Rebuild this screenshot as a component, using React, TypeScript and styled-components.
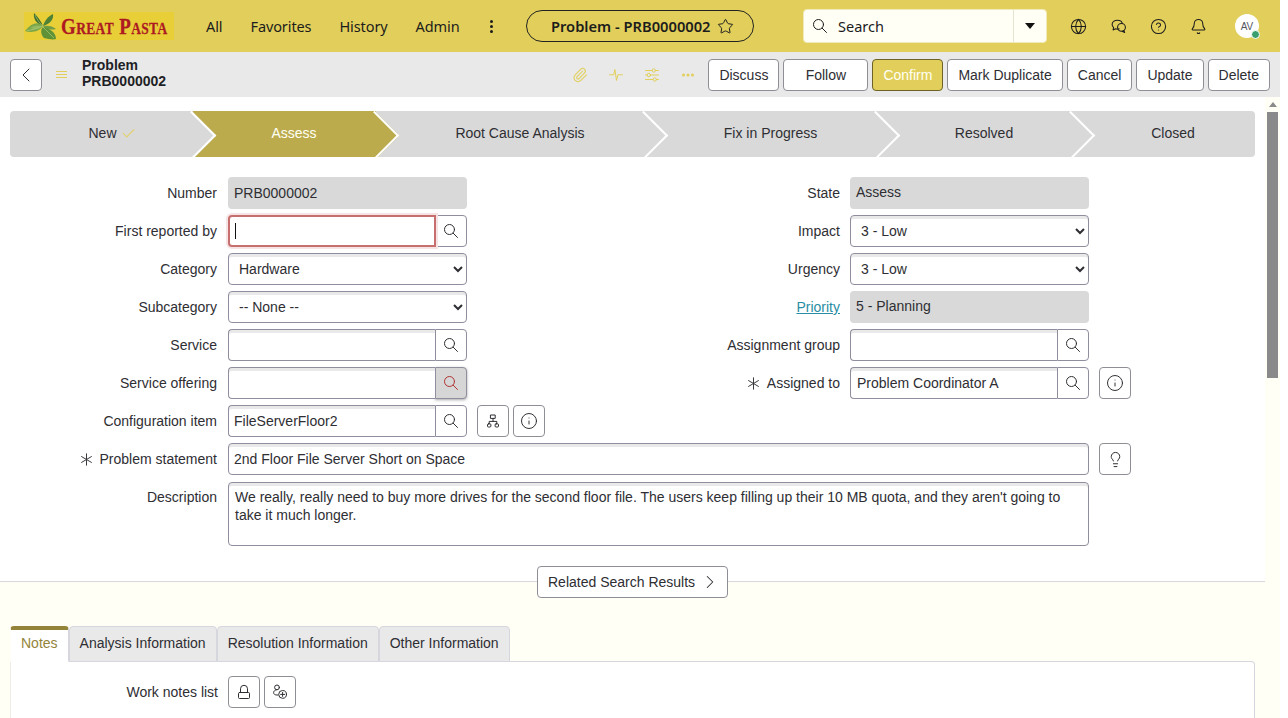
import { PropsWithChildren } from 'react';
import styled, { createGlobalStyle } from 'styled-components';
import {
  Bell,
  ChevronLeft,
  ChevronRight,
  CircleHelp,
  Globe,
  Info,
  Lightbulb,
  Paperclip,
  Star,
} from 'lucide-react';

const GlobalStyle = createGlobalStyle`
  html, body {
    margin: 0;
    padding: 0;
    background: #fff;
    overflow: hidden;
  }
  * {
    box-sizing: border-box;
  }
`;

const Page = styled.div`
  width: 1280px;
  height: 718px;
  overflow: hidden;
  font-family: 'Liberation Sans', Arial, sans-serif;
  font-size: 14px;
  color: #2e2e33;
`;

/* top bar */
const Header = styled.header`
  height: 52px;
  background: #e2cf5b;
  display: flex;
  align-items: center;
  padding-left: 24px;
  font-family: 'Noto Sans', sans-serif;
  color: #1c1c1c;
`;

const Logo = styled.div`
  width: 150px;
  height: 28px;
  background: #e8cf38;
  display: flex;
  align-items: center;
  gap: 3px;
  margin-right: 32px;
  flex: none;

  svg {
    flex: none;
  }
`;

const LogoText = styled.span`
  display: inline-block;
  font-family: 'Liberation Serif', serif;
  font-weight: 700;
  font-size: 24px;
  font-variant: small-caps;
  color: #ad1a22;
  letter-spacing: 0.5px;
  white-space: nowrap;
  transform: scaleX(0.79);
  transform-origin: left center;
  -webkit-text-stroke: 0.3px #ad1a22;
`;

const Nav = styled.nav`
  display: flex;
  align-items: center;
  gap: 28px;
  width: 320px;
  flex: none;
`;

const NavLink = styled.span`
  font-size: 14.5px;
  letter-spacing: -0.1px;
`;

const NavMore = styled.span`
  display: flex;
  flex-direction: column;
  gap: 2px;
  margin-left: 2px;

  i {
    display: block;
    width: 3px;
    height: 3px;
    border-radius: 50%;
    background: #1c1c1c;
  }
`;

const RecordPill = styled.div`
  width: 228px;
  height: 32px;
  border: 1px solid #222;
  border-radius: 16px;
  display: flex;
  align-items: center;
  gap: 6px;
  padding-left: 24px;
  font-size: 14.7px;
  font-weight: 600;
  margin-right: 49px;
  flex: none;
`;

const SearchBox = styled.div`
  width: 244px;
  height: 34px;
  background: #fffff5;
  border-radius: 4px;
  border: 1px solid #f0e9b8;
  display: flex;
  align-items: center;
  margin-right: 23px;
  flex: none;
`;

const SearchInner = styled.div`
  flex: 1;
  display: flex;
  align-items: center;
  gap: 10px;
  padding-left: 8px;
  font-size: 14.5px;
`;

const SearchCaret = styled.div`
  width: 33px;
  height: 100%;
  border-left: 1px solid #e4e2d0;
  display: flex;
  align-items: center;
  justify-content: center;

  &::before {
    content: '';
    border-left: 5px solid transparent;
    border-right: 5px solid transparent;
    border-top: 6px solid #111;
  }
`;

const HeaderIcons = styled.div`
  display: flex;
  align-items: center;
  gap: 23px;
`;

const Avatar = styled.div`
  position: relative;
  width: 24px;
  height: 24px;
  border-radius: 50%;
  background: #fff;
  margin-left: 5px;
  font-family: 'Liberation Sans', sans-serif;
  font-size: 10px;
  color: #55555f;
  display: flex;
  align-items: center;
  justify-content: center;
`;

const AvatarDot = styled.span`
  position: absolute;
  right: -1px;
  bottom: -1px;
  width: 9px;
  height: 9px;
  border-radius: 50%;
  background: #3a9f6e;
  border: 1.5px solid #fff;
`;

/* record toolbar */
const SubHeader = styled.div`
  height: 45px;
  background: #e9e9e9;
  display: flex;
  align-items: center;
  padding: 0 10px;
`;

const BackButton = styled.button`
  width: 32px;
  height: 32px;
  border: 1px solid #8e8e96;
  border-radius: 4px;
  background: #fff;
  padding: 0;
  display: flex;
  align-items: center;
  justify-content: center;
  color: #2e2e33;
`;

const Burger = styled.span`
  width: 11px;
  height: 7px;
  margin: 0 15px 0 14px;
  border-top: 1px solid #e2cf5b;
  border-bottom: 1px solid #e2cf5b;
  position: relative;

  &::after {
    content: '';
    position: absolute;
    left: 0;
    right: 0;
    top: 2px;
    height: 1px;
    background: #e2cf5b;
  }
`;

const RecordTitle = styled.div`
  font-weight: 700;
  font-size: 14px;
  line-height: 16px;
  color: #1f1f26;
  margin-bottom: 4px;
`;

const Actions = styled.div`
  margin-left: auto;
  display: flex;
  align-items: center;
  gap: 4px;
`;

const ActionIcons = styled.div`
  display: flex;
  align-items: center;
  gap: 20px;
  margin-right: 8px;
  color: #e2cf5b;
`;

const ActionButton = styled.button<{ $primary?: boolean; $wide?: boolean }>`
  height: 32px;
  padding: 0 10px;
  min-width: ${({ $wide }) => ($wide ? '85px' : '0')};
  border-radius: 4px;
  border: 1px solid ${({ $primary }) => ($primary ? '#6d6326' : '#8e8e96')};
  background: ${({ $primary }) => ($primary ? '#e2cf5b' : '#fff')};
  color: ${({ $primary }) => ($primary ? '#fffff5' : '#2e2e33')};
  font-family: inherit;
  font-size: 14px;
`;

const Body = styled.div`
  display: flex;
  height: 621px;
`;

const Content = styled.main`
  width: 1265px;
  background: #fffff5;
`;

/* fake page scrollbar */
const ScrollTrack = styled.div`
  width: 15px;
  background: #fffff5;
  display: flex;
  flex-direction: column;
  align-items: center;
`;

const ScrollUp = styled.span`
  height: 15px;
  display: flex;
  align-items: center;

  &::before {
    content: '';
    border-left: 4px solid transparent;
    border-right: 4px solid transparent;
    border-bottom: 5px solid #8a8a8a;
  }
`;

const ScrollThumb = styled.span`
  width: 11px;
  height: 266px;
  background: #8a8a8a;
`;

const FormArea = styled.div`
  background: #fff;
  height: 485px;
  padding: 14px 10px 0;
  border-bottom: 1px solid #d9d9d9;
`;

/* process stepper */
const Stepper = styled.div`
  height: 46px;
  display: flex;
  border-radius: 4px;
  overflow: hidden;
  margin-bottom: 20px;
`;

const Step = styled.div<{ $width: number; $active?: boolean; $order: number }>`
  position: relative;
  width: ${({ $width }) => $width}px;
  flex: none;
  z-index: ${({ $order }) => $order};
  background: ${({ $active }) => ($active ? '#bcab4c' : '#d9d9d9')};
  color: ${({ $active }) => ($active ? '#fffff5' : '#2e2e33')};
  display: flex;
  align-items: center;
  justify-content: center;
  gap: 6px;
  padding: 0 0 2px 19px;

  &::after {
    content: '';
    display: ${({ $order }) => ($order === 1 ? 'none' : 'block')};
    position: absolute;
    right: -16px;
    top: 6.5px;
    width: 33px;
    height: 33px;
    transform: rotate(45deg);
    background: inherit;
    border-top: 2px solid #fff;
    border-right: 2px solid #fff;
  }
`;

const StepLabel = styled.span`
  position: relative;
  z-index: 1;
`;

const StepCheck = styled.span`
  width: 11px;
  height: 6px;
  border-left: 1px solid #e2cf5b;
  border-bottom: 1px solid #e2cf5b;
  transform: rotate(-45deg) translate(1px, -1px);
`;

/* form rows */
const Columns = styled.div`
  display: grid;
  grid-template-columns: 612px 1fr;
  margin-left: -10px;
  padding-left: 10px;
`;

const Column = styled.div`
  display: flex;
  flex-direction: column;
`;

const Row = styled.div`
  display: flex;
  align-items: center;
  height: 32px;
  margin-bottom: 6px;
  margin-left: -10px;
`;

const RightRow = styled(Row)`
  margin-left: 0;
`;

const Label = styled.label`
  width: 218px;
  flex: none;
  padding-right: 1px;
  margin-right: 10px;
  display: flex;
  align-items: center;
  justify-content: flex-end;
  gap: 7px;
  color: #2e2e33;
`;

const RightLabel = styled(Label)`
  padding-right: 0;
`;

const PriorityLink = styled.a`
  color: #2a8da3;
  text-decoration: underline;
`;

const ReadOnly = styled.div<{ $raised?: boolean }>`
  width: 239px;
  height: 32px;
  background: #d9d9d9;
  border-radius: 4px;
  padding: ${({ $raised }) => ($raised ? '0 6px 2px' : '0 6px')};
  display: flex;
  align-items: center;
`;

const NativeSelect = styled.select`
  width: 239px;
  height: 32px;
  border: 1px solid #8e8e9e;
  border-radius: 4px;
  background: #fff;
  box-shadow: inset 0 3px 0 #e9e9e9;
  padding: 0 2px 0 6px;
  font-family: inherit;
  font-size: 14px;
  color: #2e2e33;
`;

const Lookup = styled.div`
  width: 239px;
  height: 32px;
  display: flex;
`;

const LookupField = styled.div<{ $focused?: boolean; $inset: number }>`
  flex: 1;
  height: 32px;
  position: relative;
  z-index: ${({ $focused }) => ($focused ? 1 : 0)};
  margin-right: ${({ $focused }) => ($focused ? '-1px' : '0')};
  border: ${({ $focused }) => ($focused ? '2px solid #c76f6f' : '1px solid #8e8e9e')};
  border-right: ${({ $focused }) => ($focused ? '2px solid #c76f6f' : '0')};
  border-radius: 4px 0 0 4px;
  background: #fff;
  box-shadow: ${({ $focused }) => ($focused ? '0 0 0 2px #f6e3e3' : 'inset 0 3px 0 #e9e9e9')};
  padding-left: ${({ $inset }) => $inset}px;
  display: flex;
  align-items: center;
`;

const Caret = styled.span`
  width: 1px;
  height: 16px;
  background: #111;
`;

const LookupButton = styled.button<{ $hot?: boolean }>`
  width: 32px;
  height: 32px;
  padding: 0;
  border: 1px solid #8e8e9e;
  border-radius: 0 4px 4px 0;
  background: ${({ $hot }) => ($hot ? '#d6d6d6' : '#fff')};
  box-shadow: ${({ $hot }) => ($hot ? '0 1px 3px rgba(0,0,0,.35)' : 'none')};
  color: ${({ $hot }) => ($hot ? '#b03232' : '#2e2e33')};
  display: flex;
  align-items: center;
  justify-content: center;
`;

const IconButton = styled.button`
  width: 32px;
  height: 32px;
  flex: none;
  padding: 0;
  border: 1px solid #8e8e96;
  border-radius: 4px;
  background: #fff;
  color: #2e2e33;
  display: flex;
  align-items: center;
  justify-content: center;
`;

const IconGroup = styled.div<{ $gap: number; $left: number }>`
  display: flex;
  gap: ${({ $gap }) => $gap}px;
  margin-left: ${({ $left }) => $left}px;
`;

const WideField = styled.div`
  width: 861px;
  height: 32px;
  border: 1px solid #8e8e9e;
  border-radius: 4px;
  background: #fff;
  box-shadow: inset 0 3px 0 #e9e9e9;
  padding-left: 5px;
  display: flex;
  align-items: center;
`;

const DescriptionRow = styled.div`
  display: flex;
  align-items: flex-start;
  margin: 7px 0 0 -10px;
`;

const DescriptionLabel = styled(Label)`
  padding-top: 7px;
`;

const TextArea = styled.div`
  width: 861px;
  height: 64px;
  border: 1px solid #8e8e9e;
  border-radius: 4px;
  background: #fff;
  box-shadow: inset 0 3px 0 #e9e9e9;
  padding: 5px 6px;
  line-height: 18px;
`;

/* lower part */
const RelatedWrap = styled.div`
  display: flex;
  justify-content: center;
  margin-top: -16px;
`;

const RelatedButton = styled.button`
  height: 32px;
  width: 191px;
  border: 1px solid #8e8e96;
  border-radius: 4px;
  background: #fff;
  font-family: inherit;
  font-size: 14px;
  color: #2e2e33;
  display: flex;
  align-items: center;
  justify-content: space-between;
  padding: 0 10px;

  svg {
    margin-right: -4px;
  }
`;

const Tabs = styled.div`
  display: flex;
  margin: 28px 0 0 10px;
  position: relative;
  z-index: 1;
`;

const Tab = styled.div<{ $active?: boolean }>`
  height: 36px;
  padding: ${({ $active }) => ($active ? '0 10px 5px' : '0 10px 2px')};
  display: flex;
  align-items: center;
  background: ${({ $active }) => ($active ? '#fff' : '#e9e9e9')};
  color: ${({ $active }) => ($active ? '#94843a' : '#2e2e33')};
  border: 1px solid #d6d6de;
  border-top: ${({ $active }) => ($active ? '4px solid #94843a' : '1px solid #d6d6de')};
  border-bottom: ${({ $active }) => ($active ? '1px solid #fff' : '1px solid #d6d6de')};
  border-left-color: ${({ $active }) => ($active ? '#fffff5' : '#d6d6de')};
  border-radius: 4px 4px 0 0;
`;

const Panel = styled.div`
  width: 1245px;
  height: 100px;
  margin: -1px 0 0 10px;
  background: #fff;
  border: 1px solid #d6d6de;
  border-left-color: #eeeee6;
  border-radius: 0 4px 0 0;
  padding-top: 14px;
`;

const PanelRow = styled.div`
  display: flex;
  align-items: center;
  height: 32px;
`;

const PanelLabel = styled.label`
  width: 207px;
  margin-right: 10px;
  text-align: right;
`;

const Svg = ({ size = 16, children }: PropsWithChildren<{ size?: number }>) => (
  <svg width={size} height={size} viewBox="0 0 16 16" fill="none" stroke="currentColor" strokeWidth="1" strokeLinecap="round" strokeLinejoin="round">
    {children}
  </svg>
);

const SearchIcon = () => (
  <Svg>
    <circle cx="6.5" cy="6.5" r="5" />
    <path d="M10.2 10.200L14.500 14.500" />
  </Svg>
);

const ChatIcon = () => (
  <Svg size={17}>
    <path d="M8.6 10.2c-.5.2-1.1.3-1.7.3-.6 0-1.1-.1-1.6-.3l-2.4 1 .5-2.3C2.5 8.1 2 7 2 6c0-2.3 2.2-3.8 4.9-3.8 2.3 0 4.1 1 4.6 2.7" />
    <circle cx="10.8" cy="8.8" r="3.7" />
    <path d="M13 11.7l.8 2-2.4-1.2" />
  </Svg>
);

const PulseIcon = () => (
  <Svg>
    <path d="M1.5 7.8h4.2l1.2-5.3 1.6 11 1.4-5.7h4.6" />
  </Svg>
);

const SlidersIcon = () => (
  <Svg>
    <path d="M1.5 3.500h6.500M11.500 3.500h3M1.500 8h1.500M6.500 8h8M1.500 12.500h7.500M12.500 12.500h2" />
    <circle cx="9.8" cy="3.5" r="1.7" />
    <circle cx="4.8" cy="8" r="1.7" />
    <circle cx="10.8" cy="12.5" r="1.7" />
  </Svg>
);

const DotsIcon = () => (
  <svg width="16" height="16" viewBox="0 0 16 16" fill="currentColor">
    <circle cx="3.5" cy="8" r="1.5" />
    <circle cx="8" cy="8" r="1.5" />
    <circle cx="12.5" cy="8" r="1.5" />
  </svg>
);

const TreeIcon = () => (
  <Svg>
    <rect x="5.8" y="2" width="4.4" height="3.4" />
    <rect x="2.5" y="10.8" width="3.4" height="3.2" rx="1" />
    <rect x="10.1" y="10.8" width="3.4" height="3.2" rx="1" />
    <path d="M8 5.400v3M4.200 10.800V8.400h7.600v2.400" />
  </Svg>
);

const LockIcon = () => (
  <Svg>
    <rect x="2.5" y="8.5" width="11" height="6" rx="1" />
    <path d="M4.500 8.500V4.800a3.500 3.500 0 0 1 7 0v3.700" />
  </Svg>
);

const AddPeopleIcon = () => (
  <Svg>
    <circle cx="5" cy="3.4" r="2.4" />
    <path d="M4.300 5.900C2.600 6.200 1.600 7.300 1.600 8.600c0 1.500 1.300 2.400 3.400 2.400h1" />
    <circle cx="10.6" cy="10.4" r="3.9" />
    <path d="M10.600 8.400v4M8.600 10.400h4" />
  </Svg>
);

const MandatoryIcon = () => (
  <svg width="13" height="13" viewBox="0 0 13 13" fill="none" stroke="#3a3a40" strokeWidth="1" strokeLinecap="round">
    <path d="M6.500.8v11.400M1.600 3.600l9.800 5.800M1.600 9.400l9.800-5.800" />
  </svg>
);

const LogoLeaves = () => (
  <svg width="34" height="28" viewBox="0 0 34 28">
    <path d="M19 14C17 9 14 5 10 1c-1 5 2 11 9 13z" fill="#3f6f2c" />
    <path d="M19 14c1-4 5-10 10-12 1 5-3 10-10 12z" fill="#4f8234" />
    <path d="M19 14c4-1 10 0 13 3-4 1-10 1-13-3z" fill="#6f9c46" />
    <path d="M19 14C14 9 7 11 1 19c6 2 14 1 18-5z" fill="#7aa648" />
    <path d="M19 15c-3 3-2 8 1 11 4 1 9 2 12 1 0-6-6-11-13-12z" fill="#5f9136" />
    <path d="M3 18.500c5-.5 11-2 16-4.500M19 15c3 3 7 7 11 11M11 3c2 4 4 8 8 11" stroke="#bfd68a" strokeWidth=".6" fill="none" />
    <path d="M6 16c4-3 8-3 12-2-3 3-7 4-12 2z" fill="#a6c673" opacity=".6" />
  </svg>
);

const steps = [
  { label: 'New', width: 183, done: true },
  { label: 'Assess', width: 183, active: true },
  { label: 'Root Cause Analysis', width: 269 },
  { label: 'Fix in Progress', width: 232 },
  { label: 'Resolved', width: 195 },
  { label: 'Closed', width: 183 },
];

const tabs = ['Notes', 'Analysis Information', 'Resolution Information', 'Other Information'];

const LookupInput = ({
  value,
  focused,
  hot,
  inset = 5,
}: {
  value?: string;
  focused?: boolean;
  hot?: boolean;
  inset?: number;
}) => (
  <Lookup>
    <LookupField $focused={focused} $inset={inset}>
      {focused ? <Caret /> : value}
    </LookupField>
    <LookupButton $hot={hot}>
      <SearchIcon />
    </LookupButton>
  </Lookup>
);

export default function App() {
  return (
    <Page>
      <GlobalStyle />
      <Header>
        <Logo>
          <LogoLeaves />
          <LogoText>Great Pasta</LogoText>
        </Logo>
        <Nav>
          <NavLink>All</NavLink>
          <NavLink>Favorites</NavLink>
          <NavLink>History</NavLink>
          <NavLink>Admin</NavLink>
          <NavMore>
            <i />
            <i />
            <i />
          </NavMore>
        </Nav>
        <RecordPill>
          Problem - PRB0000002
          <Star size={17} strokeWidth={1.4} />
        </RecordPill>
        <SearchBox>
          <SearchInner>
            <SearchIcon />
            Search
          </SearchInner>
          <SearchCaret />
        </SearchBox>
        <HeaderIcons>
          <Globe size={17} strokeWidth={1.5} />
          <ChatIcon />
          <CircleHelp size={17} strokeWidth={1.5} />
          <Bell size={17} strokeWidth={1.5} />
          <Avatar>
            AV
            <AvatarDot />
          </Avatar>
        </HeaderIcons>
      </Header>

      <SubHeader>
        <BackButton>
          <ChevronLeft size={24} strokeWidth={1} />
        </BackButton>
        <Burger />
        <RecordTitle>
          Problem
          <br />
          PRB0000002
        </RecordTitle>
        <Actions>
          <ActionIcons>
            <Paperclip size={16} strokeWidth={1.6} />
            <PulseIcon />
            <SlidersIcon />
            <DotsIcon />
          </ActionIcons>
          <ActionButton>Discuss</ActionButton>
          <ActionButton $wide>Follow</ActionButton>
          <ActionButton $primary>Confirm</ActionButton>
          <ActionButton>Mark Duplicate</ActionButton>
          <ActionButton>Cancel</ActionButton>
          <ActionButton>Update</ActionButton>
          <ActionButton>Delete</ActionButton>
        </Actions>
      </SubHeader>

      <Body>
        <Content>
          <FormArea>
            <Stepper>
              {steps.map((step, i) => (
                <Step key={step.label} $width={step.width} $active={step.active} $order={steps.length - i}>
                  <StepLabel>{step.label}</StepLabel>
                  {step.done && <StepCheck />}
                </Step>
              ))}
            </Stepper>

            <Columns>
              <Column>
                <Row>
                  <Label>Number</Label>
                  <ReadOnly>PRB0000002</ReadOnly>
                </Row>
                <Row>
                  <Label>First reported by</Label>
                  <LookupInput focused />
                </Row>
                <Row>
                  <Label>Category</Label>
                  <NativeSelect defaultValue="Hardware">
                    <option>Hardware</option>
                  </NativeSelect>
                </Row>
                <Row>
                  <Label>Subcategory</Label>
                  <NativeSelect defaultValue="-- None --">
                    <option>-- None --</option>
                  </NativeSelect>
                </Row>
                <Row>
                  <Label>Service</Label>
                  <LookupInput />
                </Row>
                <Row>
                  <Label>Service offering</Label>
                  <LookupInput hot />
                </Row>
                <Row>
                  <Label>Configuration item</Label>
                  <LookupInput value="FileServerFloor2" />
                  <IconGroup $gap={4} $left={10}>
                    <IconButton>
                      <TreeIcon />
                    </IconButton>
                    <IconButton>
                      <Info size={18} strokeWidth={1.3} />
                    </IconButton>
                  </IconGroup>
                </Row>
              </Column>
              <Column>
                <RightRow>
                  <RightLabel>State</RightLabel>
                  <ReadOnly $raised>Assess</ReadOnly>
                </RightRow>
                <RightRow>
                  <RightLabel>Impact</RightLabel>
                  <NativeSelect defaultValue="3 - Low">
                    <option>3 - Low</option>
                  </NativeSelect>
                </RightRow>
                <RightRow>
                  <RightLabel>Urgency</RightLabel>
                  <NativeSelect defaultValue="3 - Low">
                    <option>3 - Low</option>
                  </NativeSelect>
                </RightRow>
                <RightRow>
                  <RightLabel>
                    <PriorityLink>Priority</PriorityLink>
                  </RightLabel>
                  <ReadOnly $raised>5 - Planning</ReadOnly>
                </RightRow>
                <RightRow>
                  <RightLabel>Assignment group</RightLabel>
                  <LookupInput />
                </RightRow>
                <RightRow>
                  <RightLabel>
                    <MandatoryIcon />
                    Assigned to
                  </RightLabel>
                  <LookupInput value="Problem Coordinator A" inset={6} />
                  <IconGroup $gap={4} $left={10}>
                    <IconButton>
                      <Info size={18} strokeWidth={1.3} />
                    </IconButton>
                  </IconGroup>
                </RightRow>
              </Column>
            </Columns>

            <Row>
              <Label>
                <MandatoryIcon />
                Problem statement
              </Label>
              <WideField>2nd Floor File Server Short on Space</WideField>
              <IconGroup $gap={4} $left={10}>
                <IconButton>
                  <Lightbulb size={17} strokeWidth={1.4} />
                </IconButton>
              </IconGroup>
            </Row>
            <DescriptionRow>
              <DescriptionLabel>Description</DescriptionLabel>
              <TextArea>
                We really, really need to buy more drives for the second floor file. The users keep filling up their 10 MB quota, and they aren't going to take it much longer.
              </TextArea>
            </DescriptionRow>
          </FormArea>

          <RelatedWrap>
            <RelatedButton>
              Related Search Results
              <ChevronRight size={22} strokeWidth={1.1} />
            </RelatedButton>
          </RelatedWrap>

          <Tabs>
            {tabs.map((tab, i) => (
              <Tab key={tab} $active={i === 0}>
                {tab}
              </Tab>
            ))}
          </Tabs>
          <Panel>
            <PanelRow>
              <PanelLabel>Work notes list</PanelLabel>
              <IconGroup $gap={4} $left={0}>
                <IconButton>
                  <LockIcon />
                </IconButton>
                <IconButton>
                  <AddPeopleIcon />
                </IconButton>
              </IconGroup>
            </PanelRow>
          </Panel>
        </Content>
        <ScrollTrack>
          <ScrollUp />
          <ScrollThumb />
        </ScrollTrack>
      </Body>
    </Page>
  );
}
